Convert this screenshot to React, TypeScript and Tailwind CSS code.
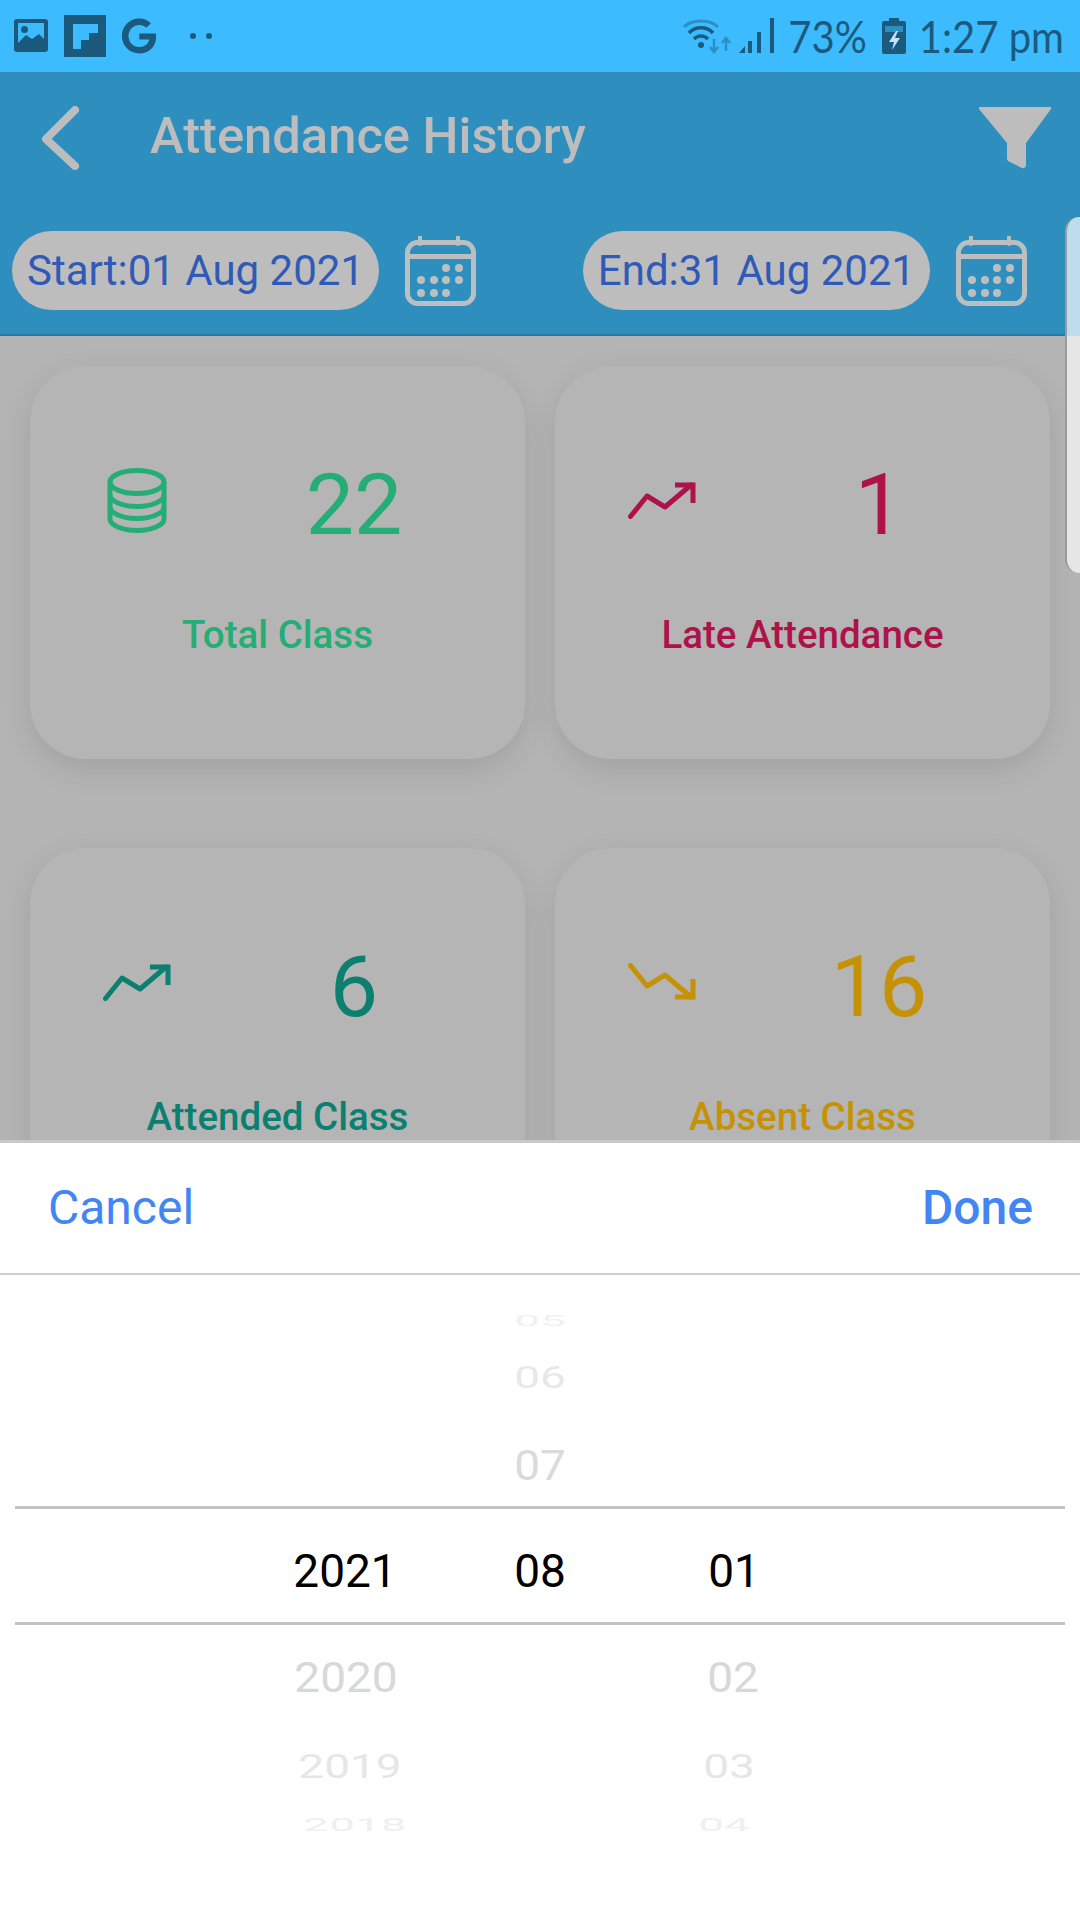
import { FaGoogle } from "react-icons/fa";

const font = { fontFamily: "Roboto, sans-serif" };

const CalendarIcon = () => (
  <svg width="71" height="70" viewBox="0 0 71 70" fill="none" className="shrink-0">
    <rect x="2.500" y="6.500" width="66" height="61" rx="10" stroke="#bcbfc0" strokeWidth="5" />
    <path d="M2 20.500h67" stroke="#bcbfc0" strokeWidth="5" />
    <path d="M15 1v7M53 1v7" stroke="#bcbfc0" strokeWidth="4" strokeLinecap="round" />
    <g fill="#bcbfc0">
      <circle cx="41" cy="32" r="4" /><circle cx="54" cy="32" r="4" />
      <circle cx="16" cy="44" r="4" /><circle cx="29" cy="44" r="4" /><circle cx="41" cy="44" r="4" /><circle cx="54" cy="44" r="4" />
      <circle cx="16" cy="57" r="4" /><circle cx="29" cy="57" r="4" /><circle cx="41" cy="57" r="4" />
    </g>
  </svg>
);

const DatabaseIcon = () => (
  <svg width="60" height="65" viewBox="0 0 60 65" fill="none" stroke="#24ad75" strokeWidth="5">
    <ellipse cx="30" cy="14" rx="27" ry="11.500" />
    <path d="M3 14v37c0 6 12 11.500 27 11.500s27-5.500 27-11.500V14" />
    <path d="M3 27c0 6 12 11.500 27 11.500s27-5.500 27-11.500" />
    <path d="M3 39c0 6 12 11.500 27 11.500s27-5.500 27-11.500" />
  </svg>
);

const TrendIcon = ({ color, down }: { color: string; down?: boolean }) => (
  <svg width="68" height="38" viewBox="0 0 68 38" fill="none" stroke={color} strokeWidth="5" className={down ? "-scale-y-100" : ""}>
    <path d="M2.500 35.500 19 15l18 11L63 4" strokeLinecap="round" strokeLinejoin="round" />
    <path d="M47 4h18v18" />
  </svg>
);

const StatusIcons = () => (
  <div className="flex items-center">
    <svg width="34" height="34" viewBox="0 0 34 34" className="ml-[14px]">
      <rect width="34" height="33" rx="3" fill="#1b5a7d" />
      <rect x="4" y="4" width="26" height="25" fill="#3cbcfe" />
      <circle cx="10.500" cy="10.500" r="3.500" fill="#1b5a7d" />
      <path d="M4 24l8-8 6 4 7-5 5 5v9H4z" fill="#1b5a7d" />
    </svg>
    <svg width="42" height="42" viewBox="0 0 42 42" className="ml-4">
      <rect width="42" height="42" fill="#1b5a7d" />
      <path d="M9 9h25v9h-9v7h-8v9H9z" fill="#3cbcfe" />
    </svg>
    <FaGoogle className="ml-[15px] text-[#1b5a7d] text-[36px]" />
    <div className="ml-[33px] flex gap-[10px]">
      <span className="w-[6px] h-[6px] rounded-full bg-[#1b5a7d]" />
      <span className="w-[6px] h-[6px] rounded-full bg-[#1b5a7d]" />
    </div>
  </div>
);

const StatusRight = () => (
  <div className="flex items-center text-[#1b5a7d]" style={{ fontFamily: "Lato, sans-serif" }}>
    <svg width="48" height="36" viewBox="0 0 48 36" fill="none">
      <path d="M1 9C9 1 27 1 35 9" stroke="#2b8fc4" strokeWidth="3" />
      <path d="M6 15C12 8 24 8 30 15" stroke="#1b5a7d" strokeWidth="3.500" />
      <path d="M11 21c4-4 10-4 14 0" stroke="#1b5a7d" strokeWidth="3.500" />
      <circle cx="18" cy="27" r="3" fill="#1b5a7d" />
      <path d="M31 21v13M27 29l4 5 4-5" stroke="#2b8fc4" strokeWidth="2.500" />
      <path d="M43 33V20M39 25l4-5 4 5" stroke="#2b8fc4" strokeWidth="2.500" />
    </svg>
    <svg width="37" height="36" viewBox="0 0 37 36" className="ml-[8px]">
      <path d="M0 35l6-7v7zM9 35V23h4v12zM18 35V14h4v21zM31 35V0h4v35z" fill="#1b5a7d" />
    </svg>
    <span className="ml-[12px] text-[40px] leading-none scale-y-[1.12]">73%</span>
    <svg width="24" height="36" viewBox="0 0 24 36" className="ml-[15px]">
      <path d="M7 0h10v3h5a2 2 0 0 1 2 2v29a2 2 0 0 1-2 2H2a2 2 0 0 1-2-2V5a2 2 0 0 1 2-2h5z" fill="#1b5a7d" />
      <rect x="3" y="8" width="18" height="6" fill="#2b8fc4" />
      <path d="M14 13l-7 11h5l-2 8 8-12h-5l3-7z" fill="#bde6fb" />
    </svg>
    <span className="ml-[13px] mr-[16px] text-[40px] leading-none scale-y-[1.12]">1:27 pm</span>
  </div>
);

const DatePill = ({ label, className }: { label: string; className: string }) => (
  <div className={`h-[79px] rounded-full bg-[#bdbdbd] flex items-center justify-center text-[42px] text-[#2f5ab8] ${className}`}>
    {label}
  </div>
);

type CardProps = { icon: React.ReactNode; value: string; label: string; text: string };

const StatCard = ({ icon, value, label, text }: CardProps) => (
  <div className={`h-[393px] rounded-[56px] bg-[#b5b5b5] shadow-[0_10px_30px_rgba(0,0,0,0.1)] pt-[91px] ${text}`}>
    <div className="grid grid-cols-[214px_220px] items-center h-[90px]">
      <div className="flex justify-center -translate-y-[2px]">{icon}</div>
      <div className="text-center text-[86px] leading-none translate-y-[3px]">{value}</div>
    </div>
    <div className="mt-[69px] text-center text-[38.500px] font-medium leading-none">{label}</div>
  </div>
);

type WheelRowProps = { year?: string; month?: string; day?: string; className: string; textClass: string; yearClass?: string; dayClass?: string };

const WheelRow = ({ year, month, day, className, textClass, yearClass = "", dayClass = "" }: WheelRowProps) => (
  <div className={`flex items-center text-[46px] leading-none ${className}`}>
    <div className={`w-[194px] text-center ${textClass} ${yearClass}`}>{year}</div>
    <div className={`w-[200px] text-center ${textClass}`}>{month}</div>
    <div className={`w-[184px] text-center ${textClass} ${dayClass}`}>{day}</div>
  </div>
);

export default function App() {
  return (
    <div className="relative w-[1080px] h-[1920px] flex flex-col overflow-hidden bg-[#b3b4b3]" style={font}>
      <div className="h-[72px] shrink-0 bg-[#3cbcfe] flex items-center justify-between">
        <StatusIcons />
        <StatusRight />
      </div>

      <div className="h-[264px] shrink-0 bg-[#2e8fbf] border-b-2 border-[#277aa3]">
        <div className="h-[132px] flex items-center pl-[41px] pr-[29px]">
          <svg width="38" height="64" viewBox="0 0 38 64" fill="none" stroke="#bdbdbd" strokeWidth="8" strokeLinecap="round" strokeLinejoin="round">
            <path d="M34 4 5 33l29 27" />
          </svg>
          <div className="ml-[71px] flex-1 text-[50.700px] font-medium text-[#bdbdbd] leading-none -translate-y-[2px]">Attendance History</div>
          <svg width="72" height="62" viewBox="0 0 72 62" fill="#bdbdbd">
            <path d="M1 0h70a1 1 0 0 1 1 2L47 36v22a3 3 0 0 1-4 3L31 55a4 4 0 0 1-3-4V36L0 2a1 1 0 0 1 1-2z" />
          </svg>
        </div>
        <div className="flex items-center pl-3 mt-[27px]">
          <DatePill label="Start:01 Aug 2021" className="w-[367px]" />
          <div className="ml-[26px]"><CalendarIcon /></div>
          <DatePill label="End:31 Aug 2021" className="w-[347px] ml-[107px]" />
          <div className="ml-[26px]"><CalendarIcon /></div>
        </div>
      </div>

      <div className="flex-1 min-h-0 overflow-hidden px-[30px] pt-[30px]">
        <div className="grid grid-cols-[495px_495px] gap-x-[30px] gap-y-[89px]">
          <StatCard icon={<DatabaseIcon />} value="22" label="Total Class" text="text-[#24ad75]" />
          <StatCard icon={<TrendIcon color="#ad1349" />} value="1" label="Late Attendance" text="text-[#ad1349]" />
          <StatCard icon={<TrendIcon color="#0b8070" />} value="6" label="Attended Class" text="text-[#0b8070]" />
          <StatCard icon={<TrendIcon color="#c69205" down />} value="16" label="Absent Class" text="text-[#c69205]" />
        </div>
      </div>

      {/* edge panel handle */}
      <div className="absolute right-0 top-[217px] w-[15px] h-[356px] rounded-l-[14px] border-l-2 border-[#9a9a9a] overflow-hidden flex flex-col">
        <div className="h-[119px] bg-[#bddcec]" />
        <div className="flex-1 bg-[#e6e6e6]" />
      </div>

      <div className="h-[780px] shrink-0 bg-white border-t-[3px] border-[#c9c9c9]">
        <div className="h-[132px] border-b-2 border-[#cfcfcf] flex items-center justify-between pl-[48px] pr-[47px] text-[48px] text-[#4285f4]">
          <span>Cancel</span>
          <span className="font-medium">Done</span>
        </div>
        <div className="pt-[21px] pl-[246px]">
          <WheelRow month="05" className="h-[50px]" textClass="text-[#f0f0f0] scale-y-[0.31]" />
          <WheelRow month="06" className="h-[62px]" textClass="text-[#e8e8e8] scale-y-[0.68]" />
          <WheelRow month="07" className="h-[82px] mt-[16px]" textClass="text-[#dadada] scale-y-[0.92]" />
        </div>
        <div className="mx-[15px] h-[119px] border-y-[3px] border-[#c2c2c2] pt-[10px] pl-[231px]">
          <WheelRow year="2021" month="08" day="01" className="h-full" textClass="text-black" yearClass="translate-x-[2px]" dayClass="translate-x-[2px]" />
        </div>
        <div className="pl-[246px] pt-[1px]">
          <WheelRow year="2020" day="02" className="h-[102px]" textClass="text-[#d8d8d8] scale-y-[0.94]" yearClass="translate-x-[3px]" dayClass="translate-x-[1px]" />
          <WheelRow year="2019" day="03" className="h-[77px]" textClass="text-[#e6e6e6] scale-y-[0.71]" yearClass="translate-x-[7px]" dayClass="-translate-x-[3px]" />
          <WheelRow year="2018" day="04" className="h-[39px]" textClass="text-[#efefef] scale-y-[0.4]" yearClass="translate-x-[12px]" dayClass="-translate-x-[8px]" />
        </div>
      </div>
    </div>
  );
}
